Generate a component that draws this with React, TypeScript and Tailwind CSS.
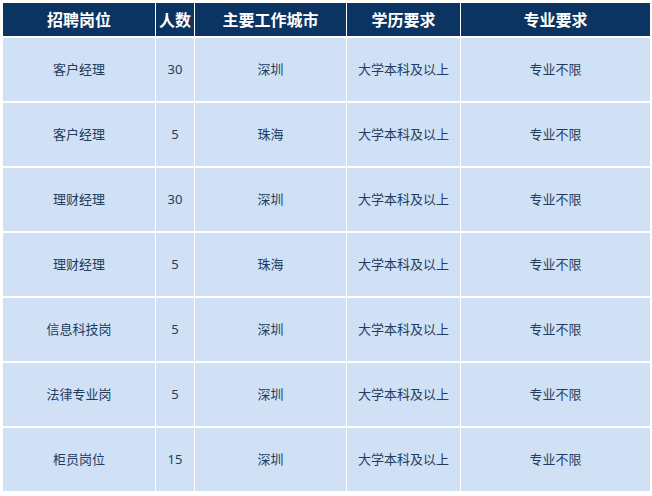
const headers = ["招聘岗位", "人数", "主要工作城市", "学历要求", "专业要求"]

const rows = [
  ["客户经理", "30", "深圳", "大学本科及以上", "专业不限"],
  ["客户经理", "5", "珠海", "大学本科及以上", "专业不限"],
  ["理财经理", "30", "深圳", "大学本科及以上", "专业不限"],
  ["理财经理", "5", "珠海", "大学本科及以上", "专业不限"],
  ["信息科技岗", "5", "深圳", "大学本科及以上", "专业不限"],
  ["法律专业岗", "5", "深圳", "大学本科及以上", "专业不限"],
  ["柜员岗位", "15", "深圳", "大学本科及以上", "专业不限"],
]

export default function App() {
  return (
    <div
      className="h-[496px] w-[652px] bg-white pl-[3px] pt-[3px]"
      style={{ fontFamily: '"Noto Sans", "Noto Sans CJK SC", sans-serif' }}
    >
      <div className="grid grid-cols-[152px_38px_151px_113px_189px] grid-rows-[33px_repeat(7,63px)] gap-x-px gap-y-[2px]">
        {headers.map((h) => (
          <div
            key={h}
            className="flex items-center justify-center bg-[#0b3462] text-[16px] font-bold text-white"
          >
            {h}
          </div>
        ))}
        {rows.map((row, i) =>
          row.map((cell, j) => (
            <div
              key={`${i}-${j}`}
              className="flex items-center justify-center bg-[#d0e1f6] text-[13px] text-[#233c5e]"
            >
              {cell}
            </div>
          ))
        )}
      </div>
    </div>
  )
}
